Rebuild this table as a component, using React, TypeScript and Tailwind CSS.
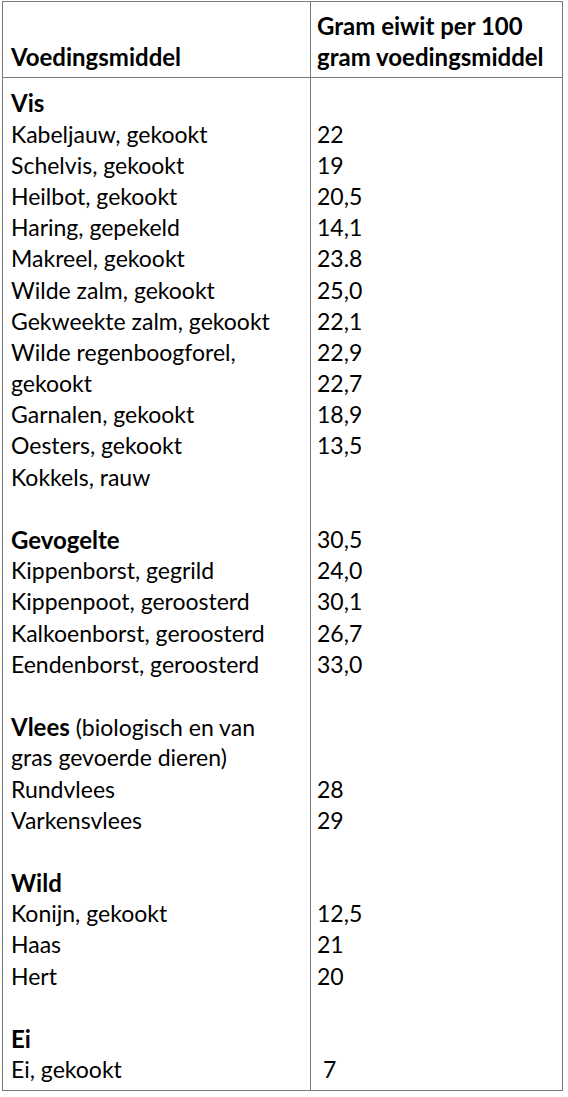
const food: { text: string; bold?: string }[] = [
  { text: "", bold: "Vis" },
  { text: "Kabeljauw, gekookt" },
  { text: "Schelvis, gekookt" },
  { text: "Heilbot, gekookt" },
  { text: "Haring, gepekeld" },
  { text: "Makreel, gekookt" },
  { text: "Wilde zalm, gekookt" },
  { text: "Gekweekte zalm, gekookt" },
  { text: "Wilde regenboogforel," },
  { text: "gekookt" },
  { text: "Garnalen, gekookt" },
  { text: "Oesters, gekookt" },
  { text: "Kokkels, rauw" },
  { text: "" },
  { text: "", bold: "Gevogelte" },
  { text: "Kippenborst, gegrild" },
  { text: "Kippenpoot, geroosterd" },
  { text: "Kalkoenborst, geroosterd" },
  { text: "Eendenborst, geroosterd" },
  { text: "" },
  { text: " (biologisch en van", bold: "Vlees" },
  { text: "gras gevoerde dieren)" },
  { text: "Rundvlees" },
  { text: "Varkensvlees" },
  { text: "" },
  { text: "", bold: "Wild" },
  { text: "Konijn, gekookt" },
  { text: "Haas" },
  { text: "Hert" },
  { text: "" },
  { text: "", bold: "Ei" },
  { text: "Ei, gekookt" },
];

const grams = [
  "", "22", "19", "20,5", "14,1", "23.8", "25,0", "22,1", "22,9", "22,7", "18,9", "13,5",
  "", "", "30,5", "24,0", "30,1", "26,7", "33,0", "", "", "", "28", "29", "", "",
  "12,5", "21", "20", "", "", "\u00a07",
];

export default function App() {
  return (
    <div className="min-h-[1097px] bg-white pl-[2px] pt-[1px] font-['Lato',sans-serif] text-black">
      <div className="grid w-[561px] grid-cols-[308px_1fr] border border-[#7a7a7a] text-[23px]">
        <div className="flex items-end border-b border-r border-[#7a7a7a] px-[8px] pb-[5px] pt-[8px] text-[24px] font-bold leading-[31.2px]">
          Voedingsmiddel
        </div>
        <div className="border-b border-[#7a7a7a] px-[6px] pb-[5px] pt-[8px] text-[24px] font-bold leading-[31.2px]">
          <div>Gram eiwit per 100</div>
          <div>gram voedingsmiddel</div>
        </div>
        <div className="border-r border-[#7a7a7a] px-[8px] pb-[5px] pt-[9px] leading-[31.2px]">
          {food.map((line, i) => (
            <div key={i} className="h-[31.2px] whitespace-pre">
              {line.bold ? <span className="text-[24px] font-bold">{line.bold}</span> : null}
              {line.text || (line.bold ? null : "\u00a0")}
            </div>
          ))}
        </div>
        <div className="px-[6px] pb-[5px] pt-[9px] leading-[31.2px]">
          {grams.map((g, i) => (
            <div key={i} className="h-[31.2px] whitespace-pre">
              {g || "\u00a0"}
            </div>
          ))}
        </div>
      </div>
    </div>
  );
}
